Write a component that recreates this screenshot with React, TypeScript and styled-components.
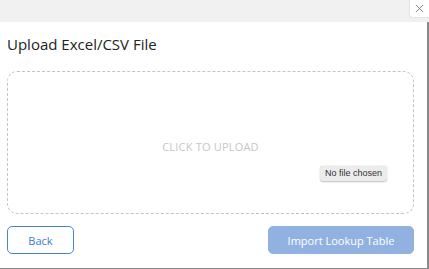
import React from "react";
import styled, { createGlobalStyle } from "styled-components";

const GlobalStyle = createGlobalStyle`
  html, body {
    margin: 0;
    padding: 0;
    width: 429px;
    height: 269px;
    overflow: hidden;
    background: #ffffff;
  }
  * {
    box-sizing: border-box;
  }
`;

const Screen = styled.div`
  position: relative;
  width: 429px;
  height: 269px;
  background: #f1f1f1;
  display: flex;
  flex-direction: column;
  font-family: "Open Sans", "Liberation Sans", sans-serif;
`;

const Backdrop = styled.div`
  height: 22px;
  flex: none;
`;

const Modal = styled.div`
  flex: 1;
  background: #fff;
  border-right: 2px solid #8a8a8a;
  border-bottom: 3px solid #8a8a8a;
  display: flex;
  flex-direction: column;
  padding: 12px 13px 14px 7px;
`;

const CloseButton = styled.button`
  position: absolute;
  top: 0;
  right: 0;
  width: 19px;
  height: 17px;
  border: none;
  background: #fff;
  border-bottom-left-radius: 3px;
  box-shadow: -0.5px 0.5px 1px rgba(0, 0, 0, 0.06);
  padding: 0;
  display: flex;
  align-items: center;
  justify-content: center;
  cursor: pointer;
`;

const Title = styled.h2`
  margin: 0;
  font-size: 15px;
  font-weight: 500;
  color: #222;
  line-height: 20px;
  letter-spacing: 0;
`;

const DropZone = styled.label`
  margin-top: 17px;
  height: 143px;
  border: 1.5px dashed #c4c4c4;
  border-radius: 10px;
  display: flex;
  align-items: center;
  justify-content: center;
  padding-top: 7px;
  position: relative;
  cursor: pointer;
`;

const DropText = styled.span`
  font-size: 11px;
  color: #c6c6c6;
  letter-spacing: 0.2px;
`;

const FileChip = styled.span`
  position: absolute;
  left: 312px;
  top: 94px;
  height: 15px;
  padding: 0 5px;
  background: #ececec;
  border-radius: 3px;
  box-shadow: 0 0.5px 1.5px rgba(0, 0, 0, 0.25);
  font-family: "Liberation Sans", Arial, sans-serif;
  font-size: 9px;
  line-height: 15px;
  color: #333;
`;

const Footer = styled.div`
  margin-top: 12px;
  display: flex;
  justify-content: space-between;
`;

const Button = styled.button<{ $primary?: boolean }>`
  height: 28px;
  border-radius: 5px;
  font-family: "Open Sans", "Liberation Sans", sans-serif;
  font-size: 11px;
  cursor: pointer;
  padding: 0;
  border: 1px solid ${(p) => (p.$primary ? "#91b2e1" : "#4b82d6")};
  background: ${(p) => (p.$primary ? "#91b2e1" : "#fff")};
  color: ${(p) => (p.$primary ? "#fff" : "#3d78d4")};
  width: ${(p) => (p.$primary ? "146px" : "67px")};
`;

const App = () => {
  return (
    <>
      <GlobalStyle />
      <Screen>
        <Backdrop />
        <CloseButton aria-label="Close">
          <svg width="9" height="9" viewBox="0 0 10 10">
            <path d="M1 1 L9 9 M9 1 L1 9" stroke="#777" strokeWidth="1" />
          </svg>
        </CloseButton>
        <Modal>
          <Title>Upload Excel/CSV File</Title>
          <DropZone>
            <DropText>CLICK TO UPLOAD</DropText>
            <FileChip>No file chosen</FileChip>
          </DropZone>
          <Footer>
            <Button>Back</Button>
            <Button $primary disabled>
              Import Lookup Table
            </Button>
          </Footer>
        </Modal>
      </Screen>
    </>
  );
};

export default App;
